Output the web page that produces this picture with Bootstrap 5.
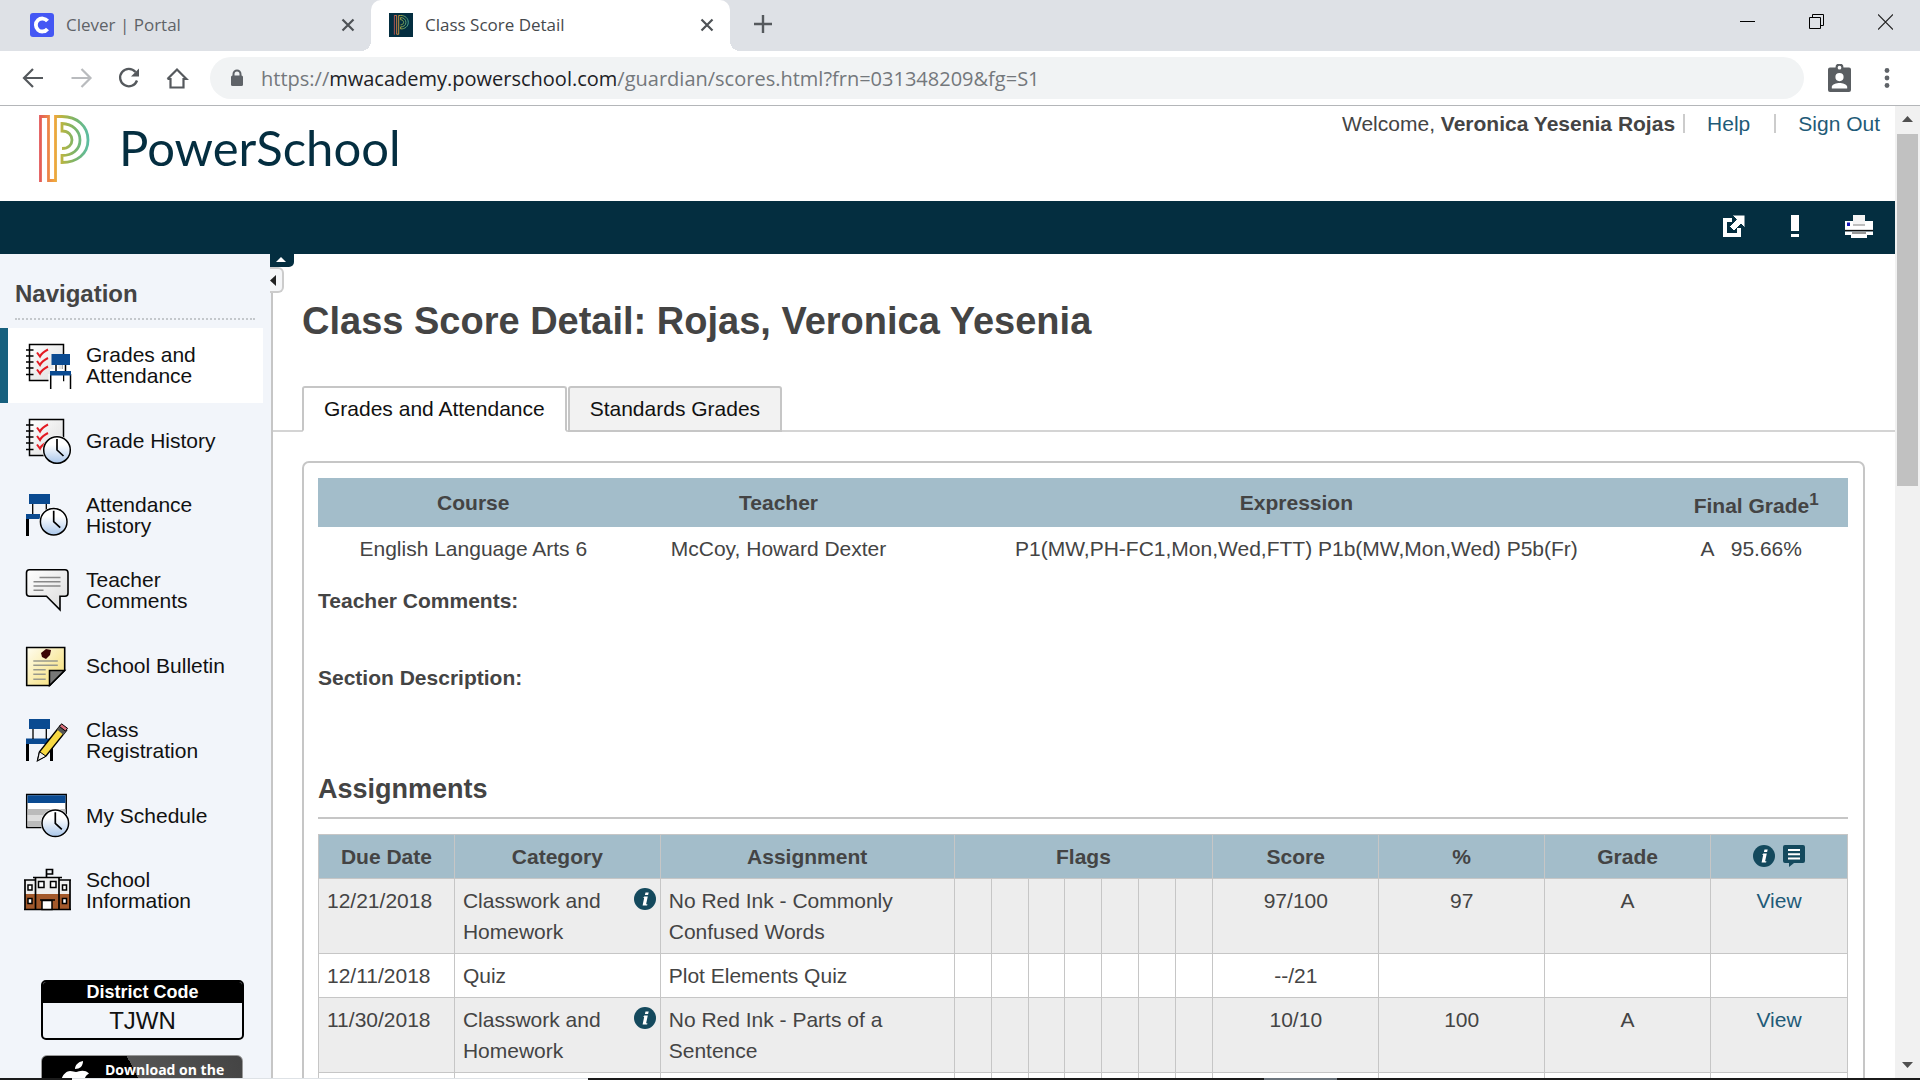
<!DOCTYPE html>
<html lang="en">
<head>
<meta charset="utf-8">
<meta name="viewport" content="width=device-width, initial-scale=1">
<title>Class Score Detail</title>
<link href="https://cdn.jsdelivr.net/npm/bootstrap@5.3.0/dist/css/bootstrap.min.css" rel="stylesheet">
<style>
  :root { --navy: #042e40; --teal: #14495d; --link: #1f5b78; --line: #c6c6c6; --head: #a3bdca; --ink: #444; }
  body { font-family: "Liberation Sans", Arial, sans-serif; font-size: 21px; line-height: 31px; color: var(--ink); background: #fff; }
  svg { display: block; flex: none; }
  a { color: var(--link); text-decoration: none; }
  button { background: none; border: 0; padding: 0; color: inherit; }

  .chrome-ui { font-family: "Open Sans", "Noto Sans", sans-serif; color: #5f6368; }
  .tab-strip { height: 51px; background: #dee1e6; font-size: 17px; }
  .browser-tab { width: 371px; padding: 0 14px 2px 30px; gap: 12px; }
  .browser-tab.current { width: 359px; padding-left: 18px; background: #fff; border-radius: 10px 10px 0 0; color: #45494d; position: relative; }
  .browser-tab.current::before, .browser-tab.current::after { content: ""; position: absolute; bottom: 0; width: 10px; height: 10px; }
  .browser-tab.current::before { right: 100%; background: radial-gradient(circle at 0 0, transparent 10px, #fff 10px); }
  .browser-tab.current::after { left: 100%; background: radial-gradient(circle at 100% 0, transparent 10px, #fff 10px); }
  .window-buttons { gap: 54px; padding: 0 27px 8px 0; color: #111; }
  .tool-row { height: 55px; border-bottom: 1px solid #b4b6b9; padding: 0 29px 0 21px; }
  .tool-buttons { gap: 24px; padding: 0 21px 0 0; }
  .address-box { height: 42px; border-radius: 21px; background: #f1f3f4; font-size: 20px; gap: 18px; padding-left: 21px; color: #74787c; }
  .address-box b { font-weight: 400; color: #202124; }

  .site-head { height: 95px; padding: 0 15px 0 39px; }
  .wordmark { font-family: Lato, sans-serif; font-size: 49px; line-height: 64px; color: var(--navy); }
  .brand { padding-top: 9px; }
  .user-links { line-height: 35px; }
  .user-links li + li { border-left: 2px solid #ccc; line-height: 19px; height: 19px; margin-top: 8px; padding-left: 22px; }
  .user-links .help-item { padding-right: 24px; }
  .action-bar { height: 53px; background: var(--navy); padding: 0 22px 3px 0; gap: 46px; }

  .side-nav { width: 273px; background: #f2f5fa; border-right: 2px solid var(--line); position: relative; }
  .side-nav h2 { font-size: 24px; font-weight: 700; line-height: 32px; padding: 24px 0 8px; margin: 0 16px 8px 15px; border-bottom: 2px dotted #c4c8cc; color: var(--ink); }
  .side-nav .nav-link { height: 75px; margin-right: 8px; padding: 0 0 1px 24px; gap: 14px; line-height: 21px; color: #111; font-size: 21px; }
  .side-nav .nav-link.active { background: #fff; border-left: 8px solid #17607e; padding-left: 16px; }
  .side-nav .nav-link span { width: 150px; }
  .district { margin: 52px 27px 15px 41px; border: 2px solid #000; border-radius: 5px; color: #111; overflow: hidden; }
  .district dt { background: #000; color: #fff; font-size: 18px; line-height: 21px; }
  .district dd { font-size: 24px; line-height: 35px; margin: 0; }
  .store-link { margin: 0 28px 0 41px; height: 62px; border: 1px solid #999; border-radius: 6px; background: linear-gradient(63deg, #000 50%, #555 50%, #444); color: #fff; padding: 5px 0 0 19px; gap: 14px; font: 700 14px/18px "Open Sans", sans-serif; }
  .fold-top { position: absolute; left: 270px; top: -2px; width: 24px; height: 15px; background: var(--navy); border-radius: 0 0 5px 0; z-index: 2; }
  .fold-side { position: absolute; left: 270px; top: 13px; width: 14px; height: 26px; background: #f5f6f8; border: 2px solid #ccc; border-left: 0; border-radius: 0 6px 6px 0; z-index: 2; }

  .report h1 { font-size: 38px; line-height: 46px; font-weight: 700; margin: 0; padding: 44px 29px 42px; }
  .report-tabs { padding-left: 29px; border-bottom: 2px solid #d4d4d4; gap: 1px; }
  .report-tabs .nav-link { border: 2px solid var(--line); border-radius: 3px 3px 0 0; background: #f2f2f2; color: #111; padding: 5px 20px 6px; line-height: 31px; margin-bottom: -2px; }
  .report-tabs .nav-link.active { background: #fff; color: #111; border-color: var(--line) var(--line) #fff; }
  .report-box { margin: 29px 30px 0 29px; border: 2px solid var(--line); border-radius: 7px; padding: 15px 15px 15px 14px; height: 900px; }
  .report-box table { table-layout: fixed; width: 100%; margin: 0; color: var(--ink); }
  .summary-grid th { background: var(--head); padding: 9px 4px; text-align: center; vertical-align: middle; }
  .summary-grid th:last-child { padding: 12px 4px 6px; }
  .summary-grid sup { font-size: 17px; }
  .summary-grid td { padding: 6px 4px 9px; text-align: center; }
  .summary-grid td:last-child { padding-right: 14px; }
  .report-box h3 { font-size: 21px; line-height: 31px; font-weight: 700; margin: 0 0 46px; }
  .report-box h2 { font-size: 27px; line-height: 33px; font-weight: 700; margin: 80px 0 15px; padding-bottom: 11px; border-bottom: 2px solid var(--line); }
  .score-grid th, .score-grid td { border: 1px solid var(--line); padding: 6px 8px; vertical-align: top; }
  .score-grid th { background: var(--head); text-align: center; }
  .score-grid tbody tr:nth-child(odd) { background: #ededed; }
  .score-grid .mid { text-align: center; }
  .score-grid .info { margin: 3px -4px 0 0; }

  .scroll-track { width: 25px; background: #f1f1f1; padding: 10px 2px 8px; }
  .scroll-thumb { height: 352px; background: #c1c1c1; margin-top: 10px; }
  .task-edge { height: 2px; background: #1b1b1b; }
</style>
<script src="https://cdn.jsdelivr.net/npm/bootstrap@5.3.0/dist/js/bootstrap.bundle.min.js"></script>
</head>
<body class="vh-100 d-flex flex-column overflow-hidden">

<svg width="0" height="0" class="position-absolute" aria-hidden="true">
  <defs>
    <linearGradient id="rainbow" gradientUnits="userSpaceOnUse" x1="0" x2="52" y1="0" y2="0"><stop offset="0" stop-color="#e2555a"/><stop offset=".3" stop-color="#f2a63c"/><stop offset=".45" stop-color="#b5b544"/><stop offset=".7" stop-color="#79b46a"/><stop offset="1" stop-color="#56bfae"/></linearGradient>
    <linearGradient id="paper" x1="0" x2="1" y1="0" y2="1"><stop offset="0" stop-color="#fff"/><stop offset="1" stop-color="#dcdcdc"/></linearGradient>
    <linearGradient id="memo" x1="0" x2="1" y1="0" y2="1"><stop offset="0" stop-color="#fffdf0"/><stop offset="1" stop-color="#f5dc6e"/></linearGradient>
    <linearGradient id="dial" x1="0" x2="0" y1="0" y2="1"><stop offset=".3" stop-color="#fff"/><stop offset="1" stop-color="#a9c6ea"/></linearGradient>
    <symbol id="pmark" viewBox="0 0 52 68"><path d="M1.500 67V1.500h8V65.500h7V1.500H23c15 0 26 9.500 26 23.500S38 47.500 23 47.500V40.500c10 0 18-5.500 18-15.500S33 9 23 8.500v7.500c6.500 0 10 4.500 10 9s-3.500 8.500-10 8.500" fill="none" stroke-width="2.800" stroke="url(#rainbow)"/></symbol>
    <symbol id="clock" viewBox="0 0 30 30"><circle cx="15" cy="15" r="14.500" fill="#fff"/><circle cx="15" cy="15" r="13.300" fill="url(#dial)" stroke="#000" stroke-width="1.500"/><path d="M15 4v11l6.500 6" fill="none" stroke="#000" stroke-width="1.700"/></symbol>
    <symbol id="notebook" viewBox="0 0 48 48"><path d="M5.500 3.500h34v36h-34z" fill="url(#paper)" stroke="#000" stroke-width="1.500"/><path d="M2 9h7.500M2 15h7.500M2 21h7.500M2 27h7.500M2 33.500h7.500" stroke="#000" stroke-width="1.400"/><path d="M13 11.500l3 4q2-4 8-7M13 20l3 4q2-4 8-7M13 28.500l3 4q2-4 8-7" fill="none" stroke="#e31b23" stroke-width="2"/></symbol>
    <symbol id="info" viewBox="0 0 22 22"><circle cx="11" cy="11" r="11" fill="#14495d"/><path d="M11.500 4.500h3.200l-.6 2.600h-3.200zM10.400 8.500h3.400l-1.700 7.800h1.300l-.3 1.200H8.600l1.600-7.700H9z" fill="#fff"/></symbol>
  </defs>
</svg>

<div class="chrome-ui flex-shrink-0">
  <div class="tab-strip d-flex align-items-stretch">
    <div class="browser-tab d-flex align-items-center">
      <svg width="24" height="24" viewBox="0 0 24 24"><rect width="24" height="24" rx="3" fill="#4457f4"/><path d="M17.500 8A6.500 6.500 0 1 0 17.500 16" fill="none" stroke="#fff" stroke-width="3.800"/></svg>
      <span class="flex-grow-1">Clever | Portal</span>
      <button type="button" aria-label="Close tab"><svg width="18" height="18" viewBox="0 0 18 18"><path d="M3.500 3.500l11 11M14.500 3.500l-11 11" stroke="#4e5256" stroke-width="2.200"/></svg></button>
    </div>
    <div class="browser-tab current d-flex align-items-center">
      <svg width="24" height="24" viewBox="0 0 24 24"><path fill="#042e40" d="M0 0h24v24H0z"/><use href="#pmark" x="4.500" y="2" width="16" height="20"/></svg>
      <span class="flex-grow-1">Class Score Detail</span>
      <button type="button" aria-label="Close tab"><svg width="18" height="18" viewBox="0 0 18 18"><path d="M3.500 3.500l11 11M14.500 3.500l-11 11" stroke="#4e5256" stroke-width="2.200"/></svg></button>
    </div>
    <button type="button" class="px-4 pb-1" aria-label="New tab"><svg width="18" height="18" viewBox="0 0 18 18"><path d="M9 0v18M0 9h18" stroke="#55595d" stroke-width="2.400"/></svg></button>
    <div class="window-buttons d-flex align-items-center ms-auto">
      <button type="button" aria-label="Minimize"><svg width="15" height="16" viewBox="0 0 15 16"><path d="M0 7.500h15" stroke="#000"/></svg></button>
      <button type="button" aria-label="Restore"><svg width="15" height="16" viewBox="0 0 15 16"><path d="M.5 3.500h11v11H.5zM3.500 3V.5h11v11H12" fill="none" stroke="#000"/></svg></button>
      <button type="button" aria-label="Close"><svg width="15" height="16" viewBox="0 0 15 16"><path d="M0 .5l15 15M15 .5l-15 15" stroke="#222" stroke-width="1.200"/></svg></button>
    </div>
  </div>
  <div class="tool-row d-flex align-items-center">
    <div class="tool-buttons d-flex align-items-center">
      <button type="button" aria-label="Back"><svg width="24" height="24" viewBox="0 0 24 24"><path d="M22 12H3M12 3L3 12l9 9" fill="none" stroke="#55595d" stroke-width="2.200"/></svg></button>
      <button type="button" aria-label="Forward"><svg width="24" height="24" viewBox="0 0 24 24"><path d="M2.500 12h19M12.500 3l9 9-9 9" fill="none" stroke="#b9bbbe" stroke-width="2.200"/></svg></button>
      <button type="button" aria-label="Reload"><svg width="24" height="24" viewBox="0 0 24 24"><path d="M20 14.500A8.700 8.700 0 1 1 18.500 6" fill="none" stroke="#55595d" stroke-width="2.300"/><path d="M22 2.500v8h-8z" fill="#55595d"/></svg></button>
      <button type="button" aria-label="Home"><svg width="24" height="24" viewBox="0 0 24 24"><path d="M5.500 12v9.500h13V12M2.500 13L12 3.500l9.500 9.500h-3M2.500 13h3" fill="none" stroke="#55595d" stroke-width="2.200"/></svg></button>
    </div>
    <div class="address-box d-flex align-items-center flex-grow-1">
      <svg width="12" height="18" viewBox="0 0 12 18"><path d="M2.500 8V5a3.500 3.500 0 0 1 7 0v3" fill="none" stroke="#5f6368" stroke-width="2"/><rect y="6.500" width="12" height="10.500" rx="1.500" fill="#5f6368"/></svg>
      <span role="textbox" aria-label="Address">https://<b>mwacademy.powerschool.com</b>/guardian/scores.html?frn=031348209&amp;fg=S1</span>
    </div>
    <button type="button" class="ms-4" aria-label="Profile"><svg width="23" height="28" viewBox="0 0 23 28"><path fill-rule="evenodd" d="M2 3.500h5.500a4 4 0 0 1 8 0H21a2 2 0 0 1 2 2V26a2 2 0 0 1-2 2H2a2 2 0 0 1-2-2V5.500a2 2 0 0 1 2-2zM11.500 1.800a1.800 1.800 0 1 0 0 3.700 1.800 1.800 0 1 0 0-3.700zM11.500 9a4 4 0 1 0 0 8.200 4 4 0 1 0 0-8.200zM3.800 24.500h15.400v-1.700c0-2.500-5-3.800-7.700-3.800s-7.700 1.300-7.700 3.800z" fill="#5a5e62"/></svg></button>
    <button type="button" class="ms-4 ps-2" aria-label="Menu"><svg width="8" height="22" viewBox="0 0 8 22"><g fill="#5f6368"><circle cx="4" cy="3.500" r="2.400"/><circle cx="4" cy="11" r="2.400"/><circle cx="4" cy="18.500" r="2.400"/></g></svg></button>
  </div>
</div>

<div class="d-flex flex-grow-1 overflow-hidden">
  <div class="d-flex flex-column flex-grow-1 overflow-hidden">
    <header class="flex-shrink-0">
      <div class="site-head d-flex justify-content-between align-items-start">
        <a href="#" class="brand d-flex" aria-label="PowerSchool home">
          <svg width="52" height="68" class="me-4"><use href="#pmark"/></svg>
          <span class="wordmark ms-1">PowerSchool</span>
        </a>
        <ul class="user-links list-unstyled d-flex m-0">
          <li class="pe-2">Welcome, <strong>Veronica Yesenia Rojas</strong></li>
          <li class="help-item"><a href="#">Help</a></li>
          <li><a href="#">Sign Out</a></li>
        </ul>
      </div>
      <div class="action-bar d-flex justify-content-end align-items-center">
        <a href="#" aria-label="Open in new window"><svg width="22" height="22" viewBox="0 0 22 22"><path d="M9 5H2v15h14v-7" fill="none" stroke="#fff" stroke-width="4"/><path d="M9 0h13v13l-4-4-7 7-4.500-4.500 7-7z" fill="#fff" stroke="#042e40" stroke-width="1"/></svg></a>
        <a href="#" aria-label="Notifications"><svg width="8" height="22" viewBox="0 0 8 22"><path d="M0 0h8v16H0zM0 19h8v3H0z" fill="#fff"/></svg></a>
        <a href="#" aria-label="Print"><svg width="28" height="24" viewBox="0 0 28 24"><path d="M0 7h28v9H0z" fill="#fff"/><path d="M8 1h12v10H8z" fill="#f4f4f4"/><path d="M8 11h12" stroke="#aaa" stroke-width="1.500"/><path d="M2 8.500h3V12H2z" fill="#1616b8"/><path d="M0 16.500h28" stroke="#111" stroke-width="1.300"/><path d="M0 17.500h28V21h-6v3H6v-3H0z" fill="#fff"/><path d="M7 17.500h14V20H7z" fill="#999"/></svg></a>
      </div>
    </header>

    <div class="d-flex flex-grow-1 align-items-stretch overflow-hidden position-relative">
      <nav class="side-nav flex-shrink-0" aria-label="Navigation">
        <h2>Navigation</h2>
        <div class="nav flex-column flex-nowrap">
          <a class="nav-link active d-flex align-items-center" href="#">
            <svg width="48" height="48"><use href="#notebook"/><path d="M26 28h13v13H26z" fill="#fff"/><path d="M27 33v15M46.500 33v15M32 23v8M41.500 23v8" stroke="#fff" stroke-width="5"/><path d="M26.700 33v15M46.500 33v15M32 23v8M41.500 23v8" stroke="#000" stroke-width="1.500"/><path d="M27.500 13H46v11H27.500zM26 30h21v4.500H26z" fill="#0a4a91"/></svg>
            <span>Grades and Attendance</span></a>
          <a class="nav-link d-flex align-items-center" href="#">
            <svg width="48" height="48"><use href="#notebook"/><use href="#clock" x="18" y="19" width="30" height="30"/></svg>
            <span>Grade History</span></a>
          <a class="nav-link d-flex align-items-center" href="#">
            <svg width="48" height="48"><path d="M5 3h21v10H5zM2 23h14v5H2z" fill="#0a4a91"/><path d="M8.700 13v10M22.300 13v10" stroke="#000" stroke-width="1.300"/><path d="M3.500 28v17" stroke="#000" stroke-width="3"/><use href="#clock" x="14.700" y="15.700" width="30" height="30"/></svg>
            <span>Attendance History</span></a>
          <a class="nav-link d-flex align-items-center" href="#">
            <svg width="48" height="48"><path d="M5.500 3.700h35.500q3 0 3 3v20.500q0 3-3 3h-5v13.500L22.500 30.200h-17q-3 0-3-3V6.700q0-3 3-3z" fill="url(#paper)" stroke="#000" stroke-width="1.600"/><path d="M15.500 11.500h21M9.500 15.800h27M9.500 20h27M9.500 24.300h10" stroke="#888" stroke-width="1.400"/></svg>
            <span>Teacher Comments</span></a>
          <a class="nav-link d-flex align-items-center" href="#">
            <svg width="48" height="48"><path d="M2.700 6.500h38v23l-15 15h-23z" fill="url(#memo)" stroke="#000" stroke-width="1.600"/><path d="M25.500 44.500v-15h15z" fill="#777" stroke="#000" stroke-width="1.500"/><path d="M9.300 20h24.500M9.300 24.300h24.500M9.300 28.700h12.400M9.300 33.300h12.400M9.300 38.300h12.400" stroke="#99998c" stroke-width="1.400"/><path d="M17 12l5-4 5 1-1 5-4 4-4-2z" fill="#3d0606"/></svg>
            <span>School Bulletin</span></a>
          <a class="nav-link d-flex align-items-center" href="#">
            <svg width="48" height="48"><path d="M5 3h21v10H5zM2 22.500h27V28H2z" fill="#0a4a91"/><path d="M9 13v10M22.300 13v10" stroke="#000" stroke-width="1.300"/><path d="M3.500 28v17M27.500 28v17" stroke="#000" stroke-width="3"/><path d="M13.500 44.700l2-9L36 10l6.500 4.500L22 40z" fill="#f7d943" stroke="#000" stroke-width="1.400"/><path d="M33 13.500l3.300-4.200q4 1 6.500 5l-3.500 4.500z" fill="#555"/><path d="M35.500 10.500l2-2.700 6 4.500-2 2.800z" fill="#d9707c" stroke="#000"/><path d="M13.500 44.700l2-9 6.500 4.500z" fill="#eee" stroke="#000"/></svg>
            <span>Class Registration</span></a>
          <a class="nav-link d-flex align-items-center" href="#">
            <svg width="48" height="48"><path d="M2.700 3.500h39.500v33H2.700z" fill="#fff" stroke="#000" stroke-width="1.500"/><path d="M3.500 4.300h38V12h-38z" fill="#0a4a91"/><path d="M3.500 18h38v6h-38z" fill="#bbb"/><path d="M3.500 24h38v6h-38z" fill="#ddd"/><path d="M3.500 30h38v5.500h-38z" fill="#bbb"/><use href="#clock" x="16.300" y="17.300" width="30" height="30"/></svg>
            <span>My Schedule</span></a>
          <a class="nav-link d-flex align-items-center" href="#">
            <svg width="48" height="48"><path d="M1 15h45v28H1z" fill="#eee"/><path d="M1 28h45v15H1z" fill="#a3592b"/><path d="M12 12h22v16H12z" fill="#eee"/><path d="M1 43V14M46 43V14M0 14h12M35 14h12M11.500 44V12M35 44V12M9 11.500h29M0 43.500h47M22.500 11V3.500h6V8h-6" fill="none" stroke="#000" stroke-width="1.700"/><path d="M14.500 15.500h5.500v6h-5.500zM26.500 15.500H32v6h-5.500zM4 19h4v5H4zM38.500 19h4v5h-4zM4 32.500h4v5H4zM38.500 32.500h4v5h-4zM18 34.500h10v9H18z" fill="#fff" stroke="#000" stroke-width="1.500"/><path d="M16 34h15" stroke="#000" stroke-width="1.500"/></svg>
            <span>School Information</span></a>
        </div>
        <dl class="district text-center"><dt>District Code</dt><dd>TJWN</dd></dl>
        <a href="#" class="store-link d-flex">
          <svg width="30" height="38" viewBox="0 0 30 38"><path d="M15 11c3-1 9-3 13 1.500-7 4-5 12 1.500 15C27 35 23 38 20 37s-5-1-8 0C6 38 0 29 0 22S5 10 9 10c3 0 4 1 6 1z" fill="#fff"/><path d="M14 8c0-4 3-7 8-8 0 5-3 8-8 8z" fill="#fff"/></svg>
          <span>Download on the</span>
        </a>
      </nav>
      <button type="button" class="fold-top" aria-label="Collapse header"><svg width="24" height="12"><path d="M6 8l5-5 5 5z" fill="#fff"/></svg></button>
      <button type="button" class="fold-side" aria-label="Collapse navigation"><svg width="12" height="22"><path d="M6 6v11l-6-5.500z" fill="#222"/></svg></button>

      <main class="report flex-grow-1 overflow-hidden">
        <h1>Class Score Detail: Rojas, Veronica Yesenia</h1>
        <div class="report-tabs nav flex-nowrap">
          <a class="nav-link active" href="#">Grades and Attendance</a>
          <a class="nav-link" href="#">Standards Grades</a>
        </div>
        <section class="report-box">
          <table class="summary-grid">
            <colgroup><col style="width:20.300%"><col style="width:19.600%"><col style="width:48.100%"><col style="width:12%"></colgroup>
            <thead><tr><th>Course</th><th>Teacher</th><th>Expression</th><th>Final Grade<sup>1</sup></th></tr></thead>
            <tbody><tr><td>English Language Arts 6</td><td>McCoy, Howard Dexter</td><td>P1(MW,PH-FC1,Mon,Wed,FTT) P1b(MW,Mon,Wed) P5b(Fr)</td><td>A &nbsp; 95.66%</td></tr></tbody>
          </table>
          <h3 class="pt-2 mt-1">Teacher Comments:</h3>
          <h3>Section Description:</h3>
          <h2>Assignments</h2>
          <table class="score-grid">
            <colgroup><col style="width:8.890%"><col style="width:13.460%"><col style="width:19.220%"><col span="7" style="width:2.418%"><col span="3" style="width:10.850%"><col style="width:8.954%"></colgroup>
            <thead><tr><th>Due Date</th><th>Category</th><th>Assignment</th><th colspan="7">Flags</th><th>Score</th><th>%</th><th>Grade</th>
              <th><span class="d-flex justify-content-center gap-2 pt-1"><svg width="22" height="22"><use href="#info"/></svg><svg width="22" height="22" viewBox="0 0 22 22"><path d="M2 0h18q2 0 2 2v14q0 2-2 2h-9l-5 4v-4H2q-2 0-2-2V2q0-2 2-2z" fill="#14495d"/><path d="M5 5h12M5 9.300h12M5 13.600h12" stroke="#fff" stroke-width="2"/></svg></span></th></tr></thead>
            <tbody>
              <tr><td>12/21/2018</td><td><div class="d-flex justify-content-between"><span>Classwork and Homework</span><svg class="info" width="22" height="22"><use href="#info"/></svg></div></td><td>No Red Ink - Commonly Confused Words</td><td></td><td></td><td></td><td></td><td></td><td></td><td></td><td class="mid">97/100</td><td class="mid">97</td><td class="mid">A</td><td class="mid"><a href="#">View</a></td></tr>
              <tr><td>12/11/2018</td><td>Quiz</td><td>Plot Elements Quiz</td><td></td><td></td><td></td><td></td><td></td><td></td><td></td><td class="mid">--/21</td><td></td><td></td><td></td></tr>
              <tr><td>11/30/2018</td><td><div class="d-flex justify-content-between"><span>Classwork and Homework</span><svg class="info" width="22" height="22"><use href="#info"/></svg></div></td><td>No Red Ink - Parts of a Sentence</td><td></td><td></td><td></td><td></td><td></td><td></td><td></td><td class="mid">10/10</td><td class="mid">100</td><td class="mid">A</td><td class="mid"><a href="#">View</a></td></tr>
              <tr><td>&nbsp;</td><td></td><td></td><td></td><td></td><td></td><td></td><td></td><td></td><td></td><td></td><td></td><td></td><td></td></tr>
            </tbody>
          </table>
        </section>
      </main>
    </div>
  </div>
  <div class="scroll-track d-flex flex-column flex-shrink-0" aria-hidden="true">
    <svg width="21" height="8"><path d="M5 6l5.500-6L16 6z" fill="#505050"/></svg>
    <div class="scroll-thumb"></div>
    <svg width="21" height="8" class="mt-auto"><path d="M5 0h11l-5.500 6z" fill="#505050"/></svg>
  </div>
</div>
<div class="task-edge d-flex flex-shrink-0">
  <span style="width:3.750%"></span><span class="bg-white border-top" style="width:26.900%"></span><span style="width:35.200%"></span><span class="bg-secondary" style="width:3.800%"></span>
</div>
</body>
</html>
